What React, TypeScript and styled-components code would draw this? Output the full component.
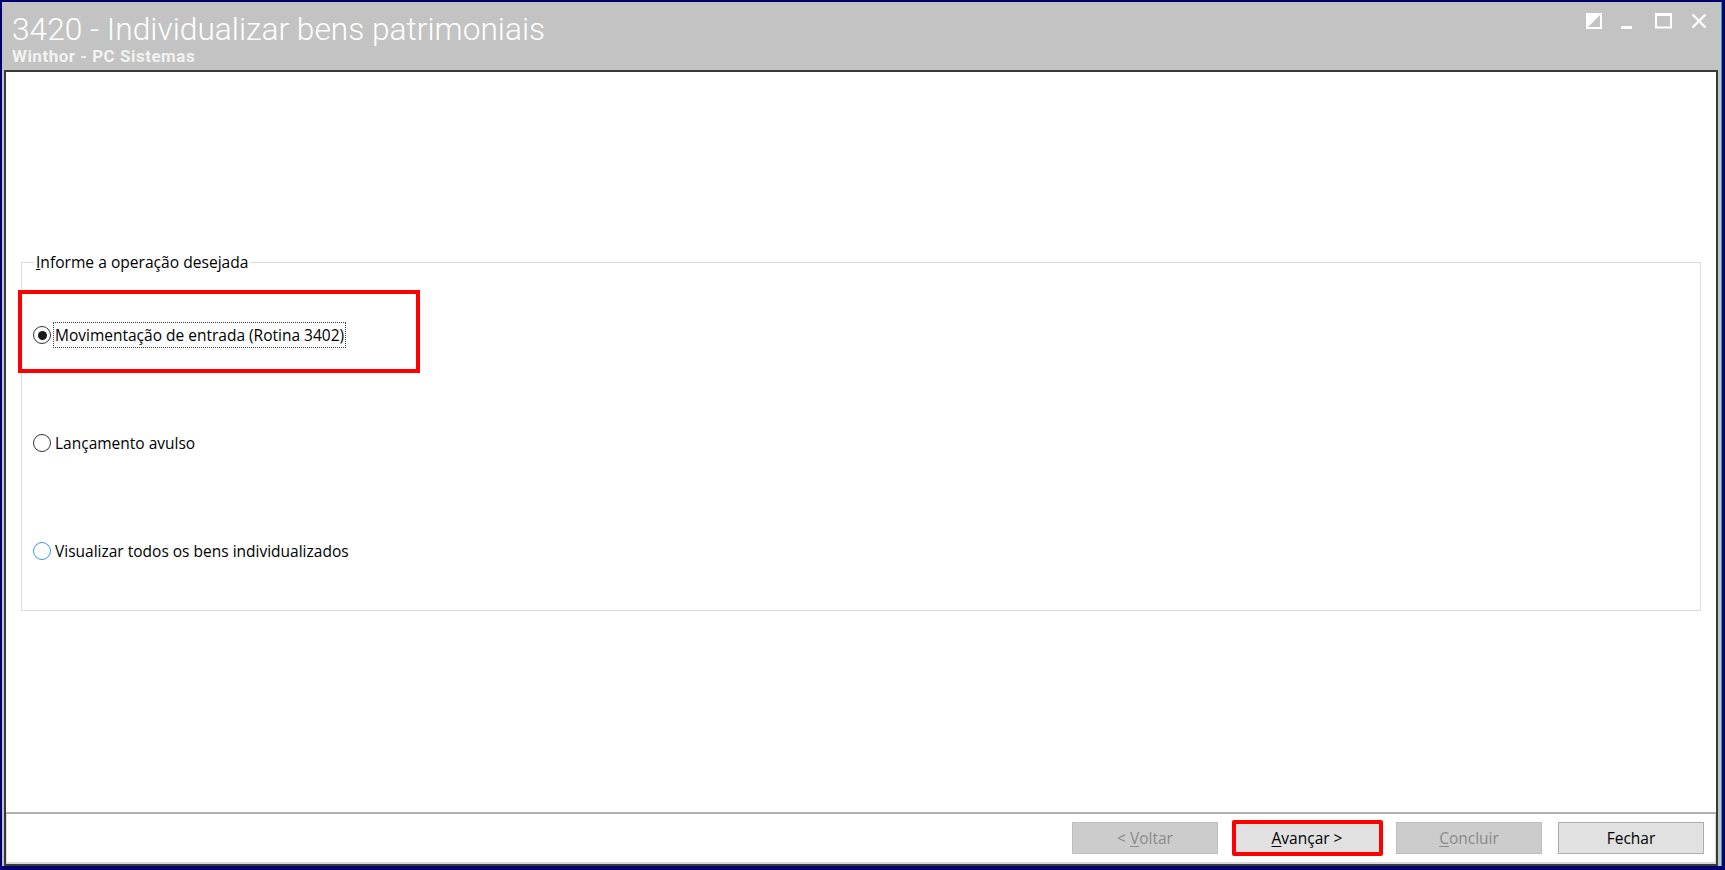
import React from "react";
import styled, { createGlobalStyle } from "styled-components";

const Global = createGlobalStyle`
  html, body { margin: 0; padding: 0; background: #00006e; }
  body { font-family: "Open Sans", "Liberation Sans", sans-serif; }
  #root { width: 1725px; height: 870px; }
`;

const Screen = styled.div`
  width: 1725px;
  height: 870px;
  box-sizing: border-box;
  background: #00006e;
  padding: 2px 3px 4px 2px;
  display: flex;
`;

const Frame = styled.div`
  flex: 1;
  display: flex;
  flex-direction: column;
  background: #c3c3c3;
  border-right: 1px solid #1aa3c4;
  padding: 0 3px 0 2px;
  min-height: 0;
`;

const TitleBar = styled.div`
  height: 68px;
  flex: none;
  display: flex;
  justify-content: space-between;
  align-items: flex-start;
`;

const TitleBlock = styled.div`
  padding: 11px 0 0 8px;
  display: flex;
  flex-direction: column;
`;

const Title = styled.div`
  font-family: Roboto, "Liberation Sans", sans-serif;
  font-weight: 300;
  font-size: 31.7px;
  line-height: 34px;
  color: #ffffff;
  white-space: nowrap;
`;

const Subtitle = styled.div`
  font-family: Roboto, "Liberation Sans", sans-serif;
  font-weight: 700;
  font-size: 17px;
  line-height: 18px;
  letter-spacing: 0.5px;
  margin-top: 0;
  color: #f2f2f2;
  white-space: nowrap;
`;

const Controls = styled.div`
  display: flex;
  align-items: flex-start;
  padding: 11px 11px 0 0;
`;

const ControlSlot = styled.div<{ $gap?: number }>`
  display: flex;
  margin-left: ${(p) => p.$gap ?? 0}px;
`;

const Content = styled.div`
  flex: 1;
  min-height: 0;
  display: flex;
  flex-direction: column;
  background: #ffffff;
  border: 2px solid #3a3a3a;
`;

const Main = styled.div`
  flex: 1;
  padding: 190px 15px 0 15px;
`;

const Group = styled.div`
  position: relative;
  height: 349px;
  box-sizing: border-box;
  border: 1px solid #dcdcdc;
  padding-top: 18px;
  display: flex;
  flex-direction: column;
`;

const Legend = styled.span`
  position: absolute;
  top: -11px;
  left: 12px;
  padding: 0 2px;
  background: #ffffff;
  font-size: 15.6px;
  line-height: 20px;
  color: #000000;
`;

const OptionRow = styled.div`
  position: relative;
  height: 108px;
  display: flex;
  align-items: center;
  padding-left: 11px;
  gap: 2px;
`;

const Radio = styled.span<{ $checked?: boolean; $hover?: boolean }>`
  width: 18px;
  height: 18px;
  box-sizing: border-box;
  border-radius: 50%;
  border: 1.5px solid ${(p) => (p.$hover ? "#3d98e8" : "#333333")};
  display: flex;
  align-items: center;
  justify-content: center;
  flex: none;
  &::after {
    content: "";
    display: ${(p) => (p.$checked ? "block" : "none")};
    width: 9px;
    height: 9px;
    border-radius: 50%;
    background: #1a1a1a;
  }
`;

const OptionLabel = styled.span<{ $focus?: boolean }>`
  font-size: 15.5px;
  line-height: 24px;
  color: #000000;
  padding: 0 1px;
  border: 1px dotted ${(p) => (p.$focus ? "#444444" : "transparent")};
  white-space: nowrap;
`;

const Highlight = styled.div`
  position: absolute;
  left: -4px;
  top: 9px;
  width: 402px;
  height: 83px;
  box-sizing: border-box;
  border: 4px solid #ff0000;
  pointer-events: none;
`;

const Footer = styled.div`
  height: 52px;
  flex: none;
  box-sizing: border-box;
  border-top: 2px solid #b1b1b1;
  box-shadow: inset 1px 0 #dadada, inset -1px 0 #dadada, inset 0 -2px #dadada;
  display: flex;
  justify-content: flex-end;
  align-items: flex-start;
  gap: 16px;
  padding: 8px 12px 0 0;
`;

const ButtonWrap = styled.div`
  position: relative;
`;

const Button = styled.button<{ $disabled?: boolean }>`
  width: 146px;
  height: 32px;
  box-sizing: border-box;
  margin: 0;
  padding: 0;
  font-family: "Open Sans", "Liberation Sans", sans-serif;
  font-size: 15.5px;
  border: 1px solid ${(p) => (p.$disabled ? "#bfbfbf" : "#adadad")};
  background: ${(p) => (p.$disabled ? "#cccccc" : "#e1e1e1")};
  color: ${(p) => (p.$disabled ? "#8a8a8a" : "#000000")};
  text-align: center;
  line-height: 30px;
  white-space: pre;
  u { text-underline-offset: 2px; }
`;

const ButtonHighlight = styled.div`
  position: absolute;
  inset: -2px -3px -2px -2px;
  border: 4px solid #ff0000;
  border-radius: 2px;
  pointer-events: none;
`;

const RestoreIcon = () => (
  <svg width="16" height="16" viewBox="0 0 16 16">
    <rect x="1" y="1" width="14" height="14" fill="none" stroke="#fff" strokeWidth="2" />
    <polygon points="1,1 15,1 1,15" fill="#fff" />
  </svg>
);

const MinIcon = () => (
  <svg width="11" height="17" viewBox="0 0 11 17">
    <rect x="0" y="13" width="11" height="3" fill="#fff" />
  </svg>
);

const MaxIcon = () => (
  <svg width="17" height="16" viewBox="0 0 17 16">
    <rect x="1" y="1.5" width="15" height="13" fill="none" stroke="#fff" strokeWidth="2" />
    <rect x="0" y="0" width="17" height="3" fill="#fff" />
  </svg>
);

const CloseIcon = () => (
  <svg width="16" height="16" viewBox="0 0 16 16">
    <path d="M1.5 1.5 L14.5 14.5 M14.5 1.5 L1.5 14.5" stroke="#fff" strokeWidth="2.4" />
  </svg>
);

export default function App() {
  return (
    <>
      <Global />
      <Screen>
        <Frame>
          <TitleBar>
            <TitleBlock>
              <Title>3420 - Individualizar bens patrimoniais</Title>
              <Subtitle>Winthor - PC Sistemas</Subtitle>
            </TitleBlock>
            <Controls>
              <ControlSlot><RestoreIcon /></ControlSlot>
              <ControlSlot $gap={19}><MinIcon /></ControlSlot>
              <ControlSlot $gap={23}><MaxIcon /></ControlSlot>
              <ControlSlot $gap={19}><CloseIcon /></ControlSlot>
            </Controls>
          </TitleBar>
          <Content>
            <Main>
              <Group>
                <Legend><u>I</u>nforme a operação desejada</Legend>
                <OptionRow>
                  <Radio $checked />
                  <OptionLabel $focus>Movimentação de entrada (Rotina 3402)</OptionLabel>
                  <Highlight />
                </OptionRow>
                <OptionRow>
                  <Radio />
                  <OptionLabel>Lançamento avulso</OptionLabel>
                </OptionRow>
                <OptionRow>
                  <Radio $hover />
                  <OptionLabel>Visualizar todos os bens individualizados</OptionLabel>
                </OptionRow>
              </Group>
            </Main>
            <Footer>
              <Button $disabled>&lt; <u>V</u>oltar</Button>
              <ButtonWrap>
                <Button><u>A</u>vançar &gt;</Button>
                <ButtonHighlight />
              </ButtonWrap>
              <Button $disabled><u>C</u>oncluir</Button>
              <Button>Fechar</Button>
            </Footer>
          </Content>
        </Frame>
      </Screen>
    </>
  );
}
